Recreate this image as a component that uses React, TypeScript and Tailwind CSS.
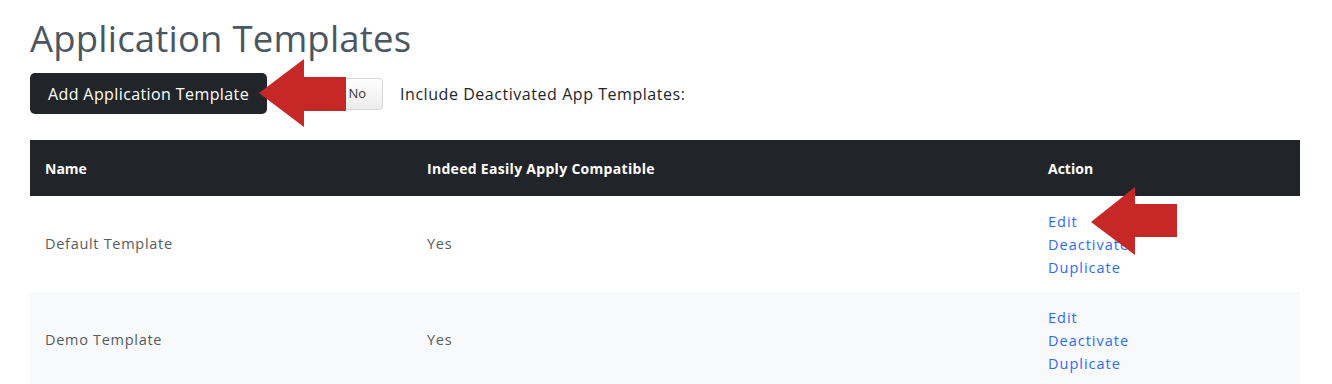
import React from "react";

const rows = [
  { name: "Default Template", compat: "Yes", bg: "bg-white" },
  { name: "Demo Template", compat: "Yes", bg: "bg-[#f8f9fa]" },
];

export default function App() {
  return (
    <div
      className="relative w-[1332px] h-[384px] overflow-hidden bg-white px-[30px]"
      style={{ fontFamily: '"Open Sans", "Liberation Sans", sans-serif' }}
    >
      <h1 className="pt-[14px] text-[36.5px] leading-[48px] text-[#4b5661] font-normal tracking-[0.2px]">
        Application Templates
      </h1>
      <div className="mt-[11px] flex items-center h-[41px]">
        <button className="h-[41px] w-[237px] rounded-[5px] bg-[#212529] text-white text-[16px] tracking-[0.4px]">
          Add Application Template
        </button>
        <div className="ml-[15px] flex h-[32px] w-[101px] items-center justify-end rounded-r-[4px] border border-[#d6d6d6] bg-gradient-to-b from-white to-[#ececec] pr-[16px] text-[13px] text-[#333]">
          No
        </div>
        <span className="ml-[17px] text-[16px] text-[#212529] tracking-[0.55px]">
          Include Deactivated App Templates:
        </span>
      </div>
      <table className="mt-[26px] w-[1270px] border-collapse">
        <thead>
          <tr className="bg-[#212529] text-white h-[56px] text-[14px] font-bold">
            <th className="w-[382px] pl-[15px] text-left font-bold">Name</th>
            <th className="w-[621px] pl-[15px] text-left font-bold tracking-[0.3px]">Indeed Easily Apply Compatible</th>
            <th className="pl-[15px] text-left font-bold">Action</th>
          </tr>
        </thead>
        <tbody>
          {rows.map((r) => (
            <tr key={r.name} className={`${r.bg} h-[96px] text-[14.5px] text-[#555b61] tracking-[0.7px]`}>
              <td className="pl-[15px]">{r.name}</td>
              <td className="pl-[15px]">{r.compat}</td>
              <td className="pl-[15px]">
                <div className="flex flex-col text-[#2e6cf6] leading-[23px] tracking-[1px]">
                  <a>Edit</a>
                  <a>Deactivate</a>
                  <a>Duplicate</a>
                </div>
              </td>
            </tr>
          ))}
        </tbody>
      </table>
      <svg className="absolute left-0 top-0 pointer-events-none" width="1332" height="384">
        <polygon
          points="259,93 304,59 304,77 346,77 346,111 304,111 304,127"
          fill="#c62828"
        />
        <polygon
          points="1091,222 1135,187 1135,204 1177,204 1177,237 1135,237 1135,255"
          fill="#c62828"
        />
      </svg>
    </div>
  );
}
